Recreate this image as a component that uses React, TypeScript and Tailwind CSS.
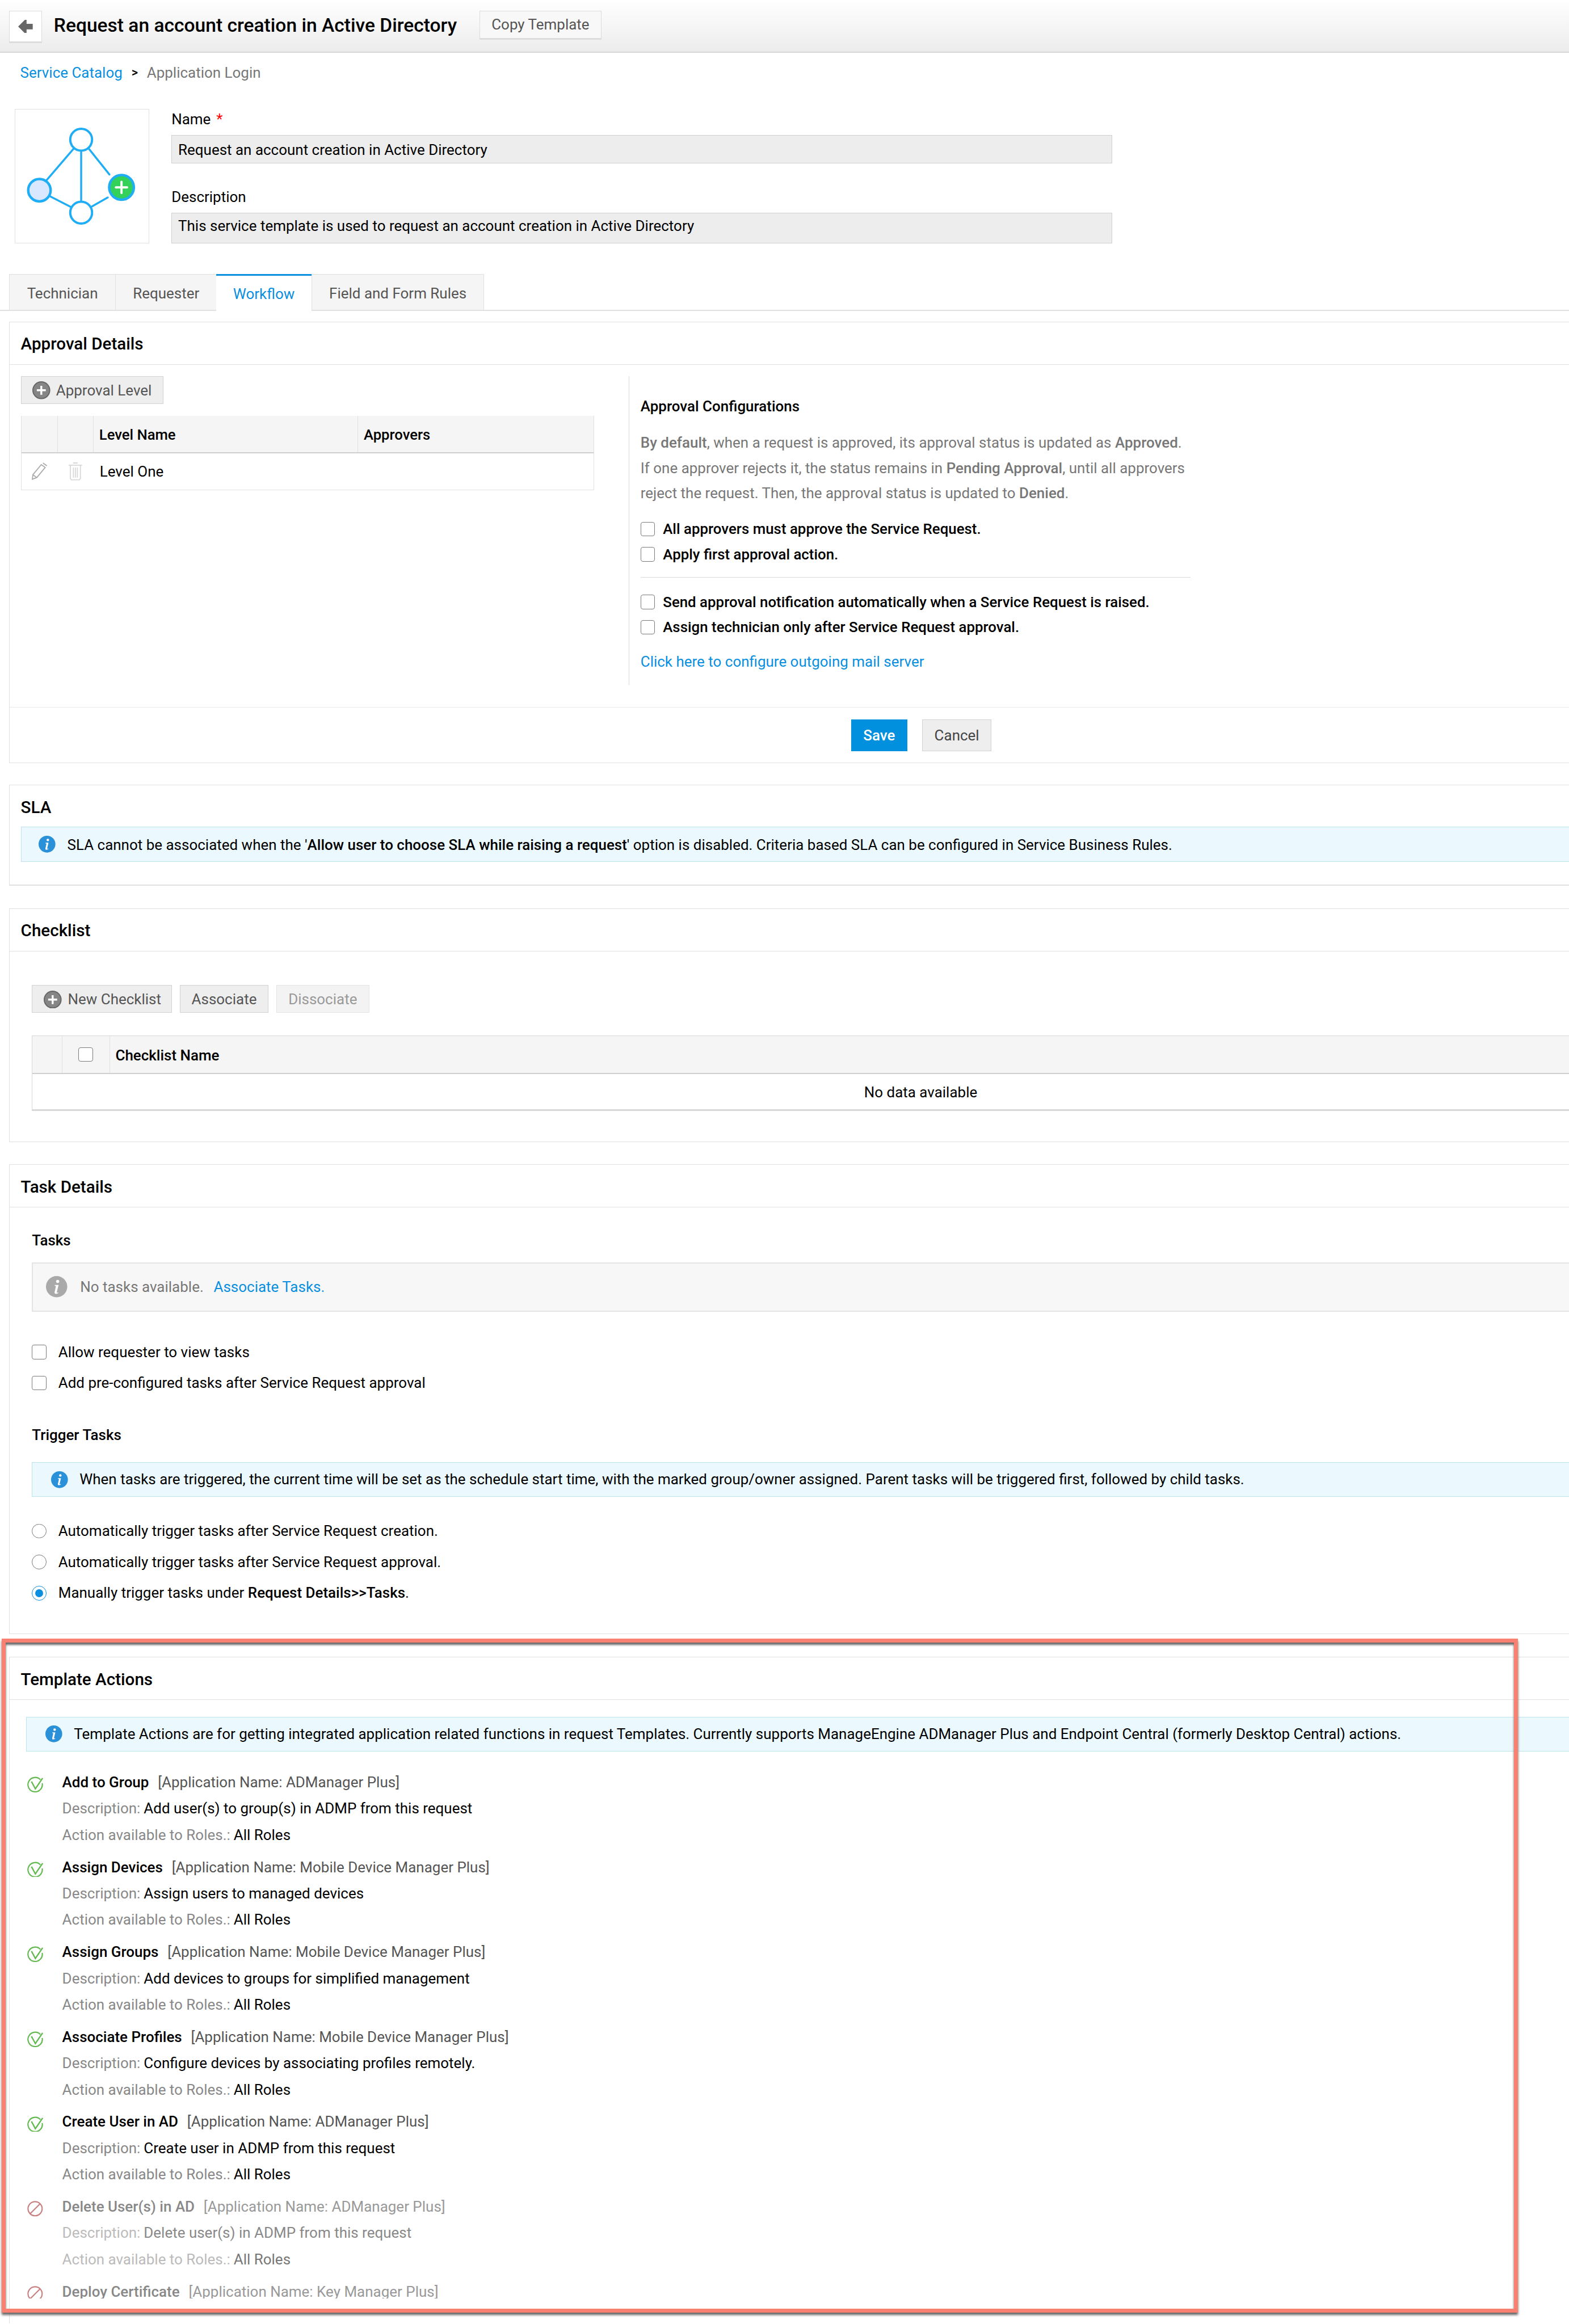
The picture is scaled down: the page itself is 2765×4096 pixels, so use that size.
import React from "react";

const Info = ({ gray = false, size = 30 }: { gray?: boolean; size?: number }) => (
  <svg width={size} height={size} viewBox="0 0 30 30" className="shrink-0">
    <circle cx="15" cy="15" r="15" fill={gray ? "#a9a9a9" : "#2a90d8"} />
    <circle cx="16.5" cy="7.5" r="2.2" fill="#fff" />
    <path d="M12.5 12.5h5.2l-2.4 10c-.2.9.4 1.2 1.9.4l.3 1c-3 1.8-6 1.6-5.3-1.3l1.9-8.6-1.8-.3z" fill="#fff" />
  </svg>
);

const PlusCircle = () => (
  <svg width="32" height="32" viewBox="0 0 32 32" className="shrink-0">
    <circle cx="16" cy="16" r="15" fill="#858585" stroke="#666" strokeWidth="2" />
    <path d="M16 8v16M8 16h16" stroke="#fff" strokeWidth="3.4" />
  </svg>
);

const Check = () => (
  <svg width="28" height="28" viewBox="0 0 28 28" className="shrink-0">
    <path d="M23.500 5.800A12.800 12.800 0 1 0 26.700 12" fill="none" stroke="#62b94f" strokeWidth="2.200" />
    <path d="M7.500 9l7 13L27.500 3" fill="none" stroke="#62b94f" strokeWidth="2.400" />
  </svg>
);

const Ban = () => (
  <svg width="28" height="28" viewBox="0 0 28 28" className="shrink-0">
    <circle cx="14" cy="14" r="12.6" fill="none" stroke="#c97f7f" strokeWidth="2.200" />
    <path d="M5 23L23 5" stroke="#c97f7f" strokeWidth="2.200" />
  </svg>
);

const Box = () => <span className="block w-[26px] h-[26px] shrink-0 rounded-[4px] border-2 border-[#7a7a7a] bg-white" />;

const Radio = ({ on = false }: { on?: boolean }) => (
  <span className={`flex items-center justify-center w-[26px] h-[26px] shrink-0 rounded-full border-2 ${on ? "border-[#0a8fdf]" : "border-[#7a7a7a]"} bg-white`}>
    {on && <span className="block w-[14px] h-[14px] rounded-full bg-[#0a8fdf]" />}
  </span>
);

const Btn = ({ children, cls = "" }: { children: React.ReactNode; cls?: string }) => (
  <div className={`flex items-center h-[50px] border-2 border-[#d2d2d2] bg-[#eeeeee] text-[#555] ${cls}`}>{children}</div>
);

const actions = [
  ["Add to Group", "ADManager Plus", "Add user(s) to group(s) in ADMP from this request", true],
  ["Assign Devices", "Mobile Device Manager Plus", "Assign users to managed devices", true],
  ["Assign Groups", "Mobile Device Manager Plus", "Add devices to groups for simplified management", true],
  ["Associate Profiles", "Mobile Device Manager Plus", "Configure devices by associating profiles remotely.", true],
  ["Create User in AD", "ADManager Plus", "Create user in ADMP from this request", true],
  ["Delete User(s) in AD", "ADManager Plus", "Delete user(s) in ADMP from this request", false],
  ["Deploy Certificate", "Key Manager Plus", "", false],
] as const;

const panel = "-mr-[30px] border-2 border-[#e0e0e0] ml-[16px] bg-white";
const head = "flex items-center pl-[20px] pt-[4px] h-[76px] border-b-2 border-[#e0e0e0] text-[30px] font-medium text-black";

export default function App() {
  return (
    <div className="h-[4147px] w-[2800px] overflow-hidden [zoom:0.9875]">
      <div className="relative h-[4148px] w-[2800px] font-['Roboto',sans-serif] text-[26.3px] text-black bg-white overflow-hidden">
        <div className="flex items-start h-[94px] pt-[19px] pl-[16px] border-b-[3px] border-[#d6d6d6] bg-gradient-to-b from-white to-[#ececec]">
          <div className="flex items-center justify-center w-[59px] h-[58px] border-2 border-b-4 border-[#dcdcdc] bg-white">
            <svg width="26" height="24" viewBox="0 0 26 24">
              <path d="M0 12L12 0h3v7h11v10H15v7h-3z" fill="#666" />
            </svg>
          </div>
          <div className="ml-[21px] w-[760px] h-[54px] flex items-center text-[34px] font-medium">Request an account creation in Active Directory</div>
          <div className="flex items-center justify-center w-[217px] h-[52px] border-2 border-b-4 border-[#dcdcdc] bg-[#f8f8f8] text-[#555]">Copy Template</div>
        </div>

        <div className="flex items-center h-[72px] pl-[36px]">
          <span className="text-[#0a8fdf]">Service Catalog</span>
          <span className="ml-[16px] text-[22px] font-medium">&gt;</span>
          <span className="ml-[16px] text-[#777]">Application Login</span>
        </div>

        <div className="flex mt-[28px] ml-[26px]">
          <div className="w-[240px] h-[240px] border-2 border-[#e0e0e0] shrink-0">
            <svg width="236" height="236" viewBox="28 196 236 236">
              <g stroke="#1fadf5" strokeWidth="3.5" strokeLinecap="round" fill="none">
                <path d="M132 266L84 322M145.500 272V360M160 267L196 312M90 351L127 370M165 369L193 353" />
              </g>
              <circle cx="145.500" cy="250" r="19.500" fill="#fff" stroke="#1fadf5" strokeWidth="4" />
              <circle cx="71" cy="340" r="20" fill="#d9e8ff" stroke="#1fadf5" strokeWidth="4.500" />
              <circle cx="145.500" cy="380" r="19.500" fill="#fff" stroke="#1fadf5" strokeWidth="4" />
              <circle cx="217.500" cy="335" r="22" fill="#33d15a" stroke="#1fadf5" strokeWidth="4.500" />
              <path d="M217.500 325v20M207.500 335h20" stroke="#fff" strokeWidth="4" strokeLinecap="round" />
            </svg>
          </div>
          <div className="ml-[40px] w-[1679px]">
            <div className="flex items-center h-[38px]">Name<span className="ml-[10px] text-[#f00]">*</span></div>
            <div className="flex items-center mt-[9px] h-[51px] pl-[11px] pt-[2px] border-2 border-[#cfcfcf] bg-[#ededed]">Request an account creation in Active Directory</div>
            <div className="flex items-center mt-[41px] h-[38px]">Description</div>
            <div className="flex items-start pt-[3px] mt-[9px] h-[55px] pl-[11px] border-2 border-[#cfcfcf] bg-[#ededed]">This service template is used to request an account creation in Active Directory</div>
          </div>
        </div>

        <div className="flex mt-[54px] pl-[16px] h-[66px] border-b-[3px] border-[#e0e0e0] text-[#555]">
          <div className="flex items-center justify-center w-[191px] h-[64px] pt-[5px] border-2 border-b-0 border-[#e0e0e0] bg-[#f5f5f5]">Technician</div>
          <div className="flex items-center justify-center w-[180px] h-[64px] pt-[5px] border-2 border-l-0 border-b-0 border-[#e0e0e0] bg-[#f5f5f5]">Requester</div>
          <div className="relative flex items-center justify-center w-[170px] h-[67px] -ml-[1px] pt-[2px] border-t-4 border-[#0a8fdf] bg-white text-[#0a8fdf]">Workflow</div>
          <div className="flex items-center justify-center w-[308px] h-[64px] pt-[5px] border-2 border-b-0 border-[#e0e0e0] bg-[#f5f5f5]">Field and Form Rules</div>
        </div>

        <div className={`${panel} mt-[19px] h-[788px]`}>
          <div className={head}>Approval Details</div>
          <div className="flex h-[612px] border-b-2 border-[#e8e8e8]">
            <div className="w-[1105px] pl-[20px] pt-[20px]">
              <Btn cls="w-[255px] pl-[20px] pt-[2px] gap-[10px]"><PlusCircle />Approval Level</Btn>
              <div className="mt-[21px] w-[1023px] border-x-2 border-b-2 border-[#e0e0e0]">
                <div className="flex h-[67px] bg-[#f5f5f5] border-b-[3px] border-[#cfcfcf] font-medium text-[26px]">
                  <div className="w-[65px] border-r-2 border-[#e0e0e0]" />
                  <div className="w-[64px] border-r-2 border-[#e0e0e0]" />
                  <div className="flex items-center w-[472px] pl-[10px] pt-[4px] border-r-2 border-[#e0e0e0]">Level Name</div>
                  <div className="flex items-center pl-[10px] pt-[4px]">Approvers</div>
                </div>
                <div className="flex items-center h-[65px]">
                  <div className="flex justify-center w-[65px]">
                    <svg width="32" height="32" viewBox="0 0 32 32">
                      <path d="M3 30l1-8L19 4l7 5-15 18zM4 22l7 5M22 1l7 5" fill="none" stroke="#aaa" strokeWidth="1.800" />
                    </svg>
                  </div>
                  <div className="flex justify-center w-[64px]">
                    <svg width="26" height="32" viewBox="0 0 26 32">
                      <path d="M1 5h24M9 1h8M4 5v24l2 2h14l2-2V5M9.500 9v18M13 9v18M16.500 9v18" fill="none" stroke="#d8d8d8" strokeWidth="1.800" />
                    </svg>
                  </div>
                  <div className="pl-[11px] pt-[2px]">Level One</div>
                </div>
              </div>
            </div>
            <div className="mt-[20px] h-[551px] w-[1010px] pl-[20px] pr-[8px] border-l-2 border-[#d8d8d8]">
              <div className="flex items-center h-[44px] mt-[33px] font-medium">Approval Configurations</div>
              <div className="mt-[20px] leading-[45px] text-[#777]">
                <div><b className="font-medium">By default</b>, when a request is approved, its approval status is updated as <b className="font-medium">Approved</b>.</div>
                <div>If one approver rejects it, the status remains in <b className="font-medium">Pending Approval</b>, until all approvers</div>
                <div>reject the request. Then, the approval status is updated to <b className="font-medium">Denied</b>.</div>
              </div>
              <div className="mt-[19px] font-medium text-[26.2px]">
                <div className="flex items-center gap-[14px] h-[45px]"><Box />All approvers must approve the Service Request.</div>
                <div className="flex items-center gap-[14px] h-[45px]"><Box />Apply first approval action.</div>
              </div>
              <div className="mt-[18px] w-[982px] border-t-2 border-[#d8d8d8]" />
              <div className="mt-[21px] font-medium text-[26.2px]">
                <div className="flex items-center gap-[14px] h-[45px]"><Box />Send approval notification automatically when a Service Request is raised.</div>
                <div className="flex items-center gap-[14px] h-[45px]"><Box />Assign technician only after Service Request approval.</div>
              </div>
              <div className="flex items-center h-[45px] mt-[17px] text-[#0a8fdf]">Click here to configure outgoing mail server</div>
            </div>
          </div>
          <div className="flex gap-[27px] pt-[21px] pl-[1502px]">
            <div className="flex items-center justify-center shrink-0 w-[100px] h-[57px] pt-[2px] bg-[#0090dd] text-white font-medium">Save</div>
            <div className="flex items-center justify-center shrink-0 w-[123px] h-[57px] pt-[2px] border-2 border-[#d2d2d2] bg-[#eeeeee] text-[#444]">Cancel</div>
          </div>
        </div>

        <div className={`${panel} mt-[39px] h-[180px] border-b-[3px]`}>
          <div className="flex items-center h-[74px] pl-[20px] pt-[4px] text-[30px] font-medium">SLA</div>
          <div className="flex items-center ml-[20px] h-[62px] pl-[31px] border-2 border-[#bce4f0] bg-[#ebf9fe] gap-[21px]">
            <Info />
            <div className="pt-[2px]">SLA cannot be associated when the '<b className="font-medium">Allow user to choose SLA while raising a request</b>' option is disabled. Criteria based SLA can be configured in Service Business Rules.</div>
          </div>
        </div>

        <div className={`${panel} mt-[40px] h-[418px]`}>
          <div className={head}>Checklist</div>
          <div className="flex gap-[14px] ml-[40px] mt-[60px]">
            <Btn cls="w-[250px] pl-[20px] pt-[2px] gap-[11px]"><PlusCircle />New Checklist</Btn>
            <Btn cls="w-[158px] pt-[2px] justify-center">Associate</Btn>
            <Btn cls="w-[166px] pt-[2px] justify-center !border-[#e4e4e4] !bg-[#f3f3f3] !text-[#999]">Dissociate</Btn>
          </div>
          <div className="ml-[40px] mt-[40px] border-2 border-b-[4px] border-[#d8d8d8]">
            <div className="flex h-[68px] bg-[#f5f5f5] border-b-[3px] border-[#cfcfcf]">
              <div className="w-[53px] border-r-2 border-[#e0e0e0]" />
              <div className="flex items-center justify-center w-[85px] border-r-2 border-[#e0e0e0]"><Box /></div>
              <div className="flex items-center pl-[10px] pt-[5px] font-medium">Checklist Name</div>
            </div>
            <div className="flex items-center justify-center h-[63px] pt-[2px] w-[3170px]">No data available</div>
          </div>
        </div>

        <div className={`${panel} mt-[39px] h-[839px]`}>
          <div className={head}>Task Details</div>
          <div className="flex items-center ml-[40px] h-[44px] mt-[37px] font-medium">Tasks</div>
          <div className="flex items-center ml-[40px] mt-[17px] h-[88px] pl-[23px] border-[3px] border-[#e4e4e4] bg-[#f7f7f7] text-[#777]">
            <Info gray size={38} />
            <span className="ml-[23px]">No tasks available.</span>
            <span className="ml-[18px] text-[#0a8fdf]">Associate Tasks.</span>
          </div>
          <div className="ml-[40px] mt-[45px]">
            <div className="flex items-center gap-[21px] h-[55px]"><Box />Allow requester to view tasks</div>
            <div className="flex items-center gap-[21px] h-[55px]"><Box />Add pre-configured tasks after Service Request approval</div>
          </div>
          <div className="flex items-center ml-[40px] h-[44px] mt-[44px] font-medium">Trigger Tasks</div>
          <div className="flex items-center ml-[40px] mt-[26px] h-[62px] pl-[33px] gap-[21px] border-2 border-[#bce4f0] bg-[#ebf9fe]">
            <Info />
            <div>When tasks are triggered, the current time will be set as the schedule start time, with the marked group/owner assigned. Parent tasks will be triggered first, followed by child tasks.</div>
          </div>
          <div className="ml-[40px] mt-[33px]">
            <div className="flex items-center gap-[21px] h-[55.500px]"><Radio />Automatically trigger tasks after Service Request creation.</div>
            <div className="flex items-center gap-[21px] h-[55.500px]"><Radio />Automatically trigger tasks after Service Request approval.</div>
            <div className="flex items-center gap-[21px] h-[55.500px]"><Radio on /><span>Manually trigger tasks under <b className="font-medium">Request Details&gt;&gt;Tasks</b>.</span></div>
          </div>
        </div>

        <div className={`${panel} mt-[40px] h-[1300px]`}>
          <div className={head}>Template Actions</div>
          <div className="flex items-center ml-[30px] mt-[30px] h-[62px] pl-[33px] gap-[21px] border-2 border-[#bce4f0] bg-[#ebf9fe]">
            <Info />
            <div>Template Actions are for getting integrated application related functions in request Templates. Currently supports ManageEngine ADManager Plus and Endpoint Central (formerly Desktop Central) actions.</div>
          </div>
          <div className="mt-[32px] ml-[32px] h-[944px] overflow-hidden">
            {actions.map(([name, app, desc, ok]) => (
              <div key={name} className="flex h-[151.500px]">
                <div className="w-[62px] pt-[13px]">{ok ? <Check /> : <Ban />}</div>
                <div>
                  <div className="flex items-center h-[47px]">
                    <b className={`font-medium ${ok ? "text-black" : "text-[#888]"}`}>{name}</b>
                    <span className={`ml-[16px] ${ok ? "text-[#555]" : "text-[#999]"}`}>[Application Name: {app}]</span>
                  </div>
                  {desc && (
                    <>
                      <div className={`flex items-center h-[47px] ${ok ? "text-black" : "text-[#888]"}`}>
                        <span className={`${ok ? "text-[#888]" : "text-[#bbb]"} mr-[6px]`}>Description:</span>{desc}
                      </div>
                      <div className={`flex items-center h-[47px] ${ok ? "text-black" : "text-[#777]"}`}>
                        <span className={`${ok ? "text-[#888]" : "text-[#bbb]"} mr-[6px]`}>Action available to Roles.:</span>All Roles
                      </div>
                    </>
                  )}
                </div>
              </div>
            ))}
          </div>
        </div>

        <div className="absolute left-[3px] top-[2925px] w-[2706px] h-[1203px] border-[8px] border-[#fa8072] shadow-[0_4px_4px_#666,inset_0_4px_4px_#666]" />
      </div>
    </div>
  );
}
